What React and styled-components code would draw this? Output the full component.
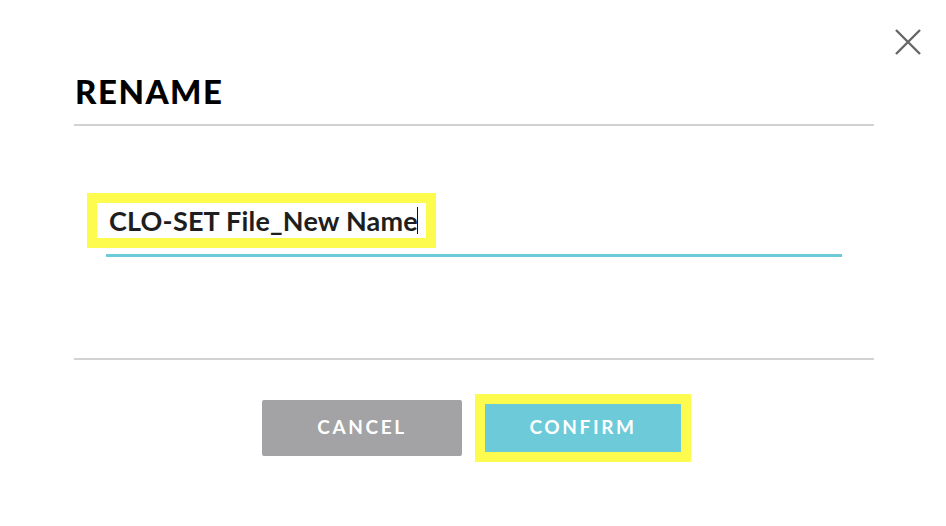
import React from 'react';
import styled, { createGlobalStyle } from 'styled-components';

const GlobalStyle = createGlobalStyle`
  html, body {
    margin: 0;
    padding: 0;
    background: #ffffff;
    font-family: Lato, "Liberation Sans", sans-serif;
  }
`;

const Page = styled.div`
  position: relative;
  width: 946px;
  height: 526px;
  background: #ffffff;
  overflow: hidden;
`;

const Dialog = styled.div`
  display: flex;
  flex-direction: column;
  margin: 0 72px 0 74px;
  padding-top: 72px;
`;

const Header = styled.div`
  padding: 0 0 14px 1px;
  border-bottom: 2px solid #d2d2d2;
`;

const Title = styled.h1`
  margin: 0;
  font-size: 33px;
  line-height: 38px;
  font-weight: 900;
  letter-spacing: 1.5px;
  color: #000000;
`;

const CloseButton = styled.button`
  position: absolute;
  top: 29px;
  right: 25px;
  width: 26px;
  height: 26px;
  padding: 0;
  border: none;
  background: none;
  cursor: pointer;
`;

const Body = styled.div`
  height: 234px;
  padding: 67px 32px 0;
  box-sizing: border-box;
  border-bottom: 2px solid #d2d2d2;
`;

const Field = styled.div`
  display: flex;
  padding-bottom: 6px;
  border-bottom: 3px solid #6ccad9;
`;

const Highlight = styled.div`
  display: flex;
  align-items: center;
  margin-left: -19px;
  padding: 0 8px 0 12px;
  height: 35px;
  border: 10px solid ${(p) => p.$color};
  background: #ffffff;
`;

const Value = styled.span`
  font-size: 27px;
  font-weight: 700;
  color: #1e1e1e;
  letter-spacing: 0.2px;
  white-space: pre;
`;

const Caret = styled.span`
  display: inline-block;
  width: 1px;
  height: 27px;
  margin-left: -1px;
  background: #111111;
`;

const Footer = styled.div`
  display: flex;
  justify-content: center;
  align-items: center;
  gap: 13px;
  padding: 34px 0 0 5px;
`;

const Button = styled.button`
  display: flex;
  align-items: center;
  justify-content: center;
  box-sizing: border-box;
  width: ${(p) => (p.$marked ? '216px' : '200px')};
  height: ${(p) => (p.$marked ? '68px' : '56px')};
  padding: 0 0 4px;
  border: ${(p) => (p.$marked ? '10px solid #fdfc4e' : 'none')};
  border-radius: ${(p) => (p.$marked ? '0' : '2px')};
  background: ${(p) => p.$bg};
  color: #ffffff;
  font-family: Lato, "Liberation Sans", sans-serif;
  font-size: 19px;
  font-weight: 700;
  letter-spacing: 2.6px;
  cursor: pointer;
`;

function CloseIcon() {
  return (
    <svg width="26" height="26" viewBox="0 0 26 26">
      <path d="M1 1 L25 25 M25 1 L1 25" stroke="#676767" strokeWidth="2.4" strokeLinecap="butt" fill="none" />
    </svg>
  );
}

export default function App() {
  return (
    <Page>
      <GlobalStyle />
      <CloseButton aria-label="Close">
        <CloseIcon />
      </CloseButton>
      <Dialog>
        <Header>
          <Title>RENAME</Title>
        </Header>
        <Body>
          <Field>
            <Highlight $color="#fdfc4e">
              <Value>CLO-SET File_New Name</Value>
              <Caret />
            </Highlight>
          </Field>
        </Body>
        <Footer>
          <Button $bg="#a3a3a5">CANCEL</Button>
          <Button $bg="#6ccad9" $marked>CONFIRM</Button>
        </Footer>
      </Dialog>
    </Page>
  );
}
